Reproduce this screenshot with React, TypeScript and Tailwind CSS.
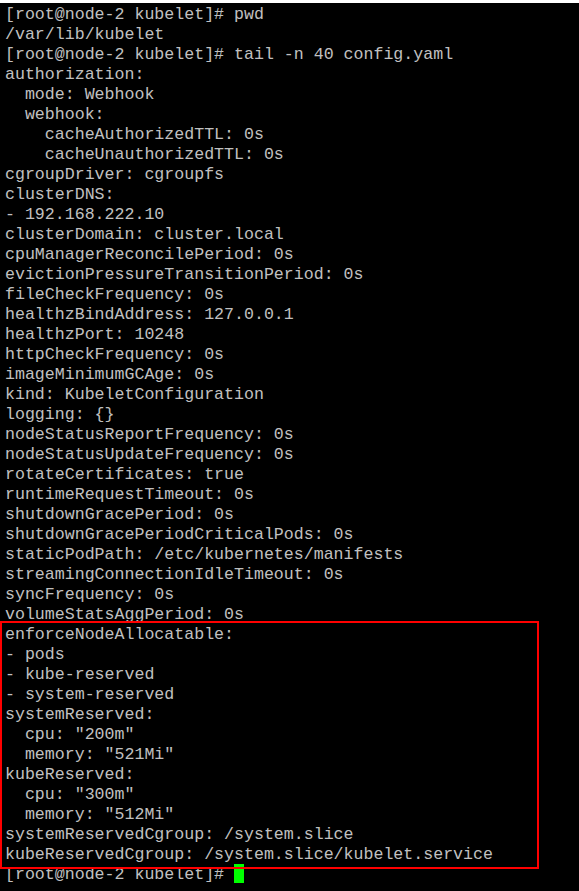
import React from "react";

const before = [
  "[root@node-2 kubelet]# pwd",
  "/var/lib/kubelet",
  "[root@node-2 kubelet]# tail -n 40 config.yaml",
  "authorization:",
  "  mode: Webhook",
  "  webhook:",
  "    cacheAuthorizedTTL: 0s",
  "    cacheUnauthorizedTTL: 0s",
  "cgroupDriver: cgroupfs",
  "clusterDNS:",
  "- 192.168.222.10",
  "clusterDomain: cluster.local",
  "cpuManagerReconcilePeriod: 0s",
  "evictionPressureTransitionPeriod: 0s",
  "fileCheckFrequency: 0s",
  "healthzBindAddress: 127.0.0.1",
  "healthzPort: 10248",
  "httpCheckFrequency: 0s",
  "imageMinimumGCAge: 0s",
  "kind: KubeletConfiguration",
  "logging: {}",
  "nodeStatusReportFrequency: 0s",
  "nodeStatusUpdateFrequency: 0s",
  "rotateCertificates: true",
  "runtimeRequestTimeout: 0s",
  "shutdownGracePeriod: 0s",
  "shutdownGracePeriodCriticalPods: 0s",
  "staticPodPath: /etc/kubernetes/manifests",
  "streamingConnectionIdleTimeout: 0s",
  "syncFrequency: 0s",
  "volumeStatsAggPeriod: 0s",
];

const highlighted = [
  "enforceNodeAllocatable:",
  "- pods",
  "- kube-reserved",
  "- system-reserved",
  "systemReserved:",
  '  cpu: "200m"',
  '  memory: "521Mi"',
  "kubeReserved:",
  '  cpu: "300m"',
  '  memory: "512Mi"',
  "systemReservedCgroup: /system.slice",
  "kubeReservedCgroup: /system.slice/kubelet.service",
];

function Line({ text }: { text: string }) {
  return <div className="h-[20px] leading-[20px] pl-[5px] whitespace-pre">{text}</div>;
}

export default function App() {
  return (
    <div
      className="w-[579px] h-[891px] bg-black border-t-[3px] border-white overflow-hidden text-[#c0c0c0] text-[16.6px]"
      style={{ fontFamily: '"Liberation Mono", "Courier New", monospace' }}
    >
      <div className="pt-[2px]">
        {before.map((t, i) => (
          <Line key={i} text={t} />
        ))}
        <div className="relative">
          {highlighted.map((t, i) => (
            <Line key={i} text={t} />
          ))}
          <div className="absolute z-10 left-0 top-[-4px] bottom-[-4px] w-[539px] border-2 border-[#ff0000] pointer-events-none" />
        </div>
        <div className="h-[20px] leading-[20px] pl-[5px] whitespace-pre flex items-start">
          <span>{"[root@node-2 kubelet]# "}</span>
          <span className="inline-block w-[10px] h-[19px] -mt-[1px] bg-[#00ff00]" />
        </div>
      </div>
    </div>
  );
}
